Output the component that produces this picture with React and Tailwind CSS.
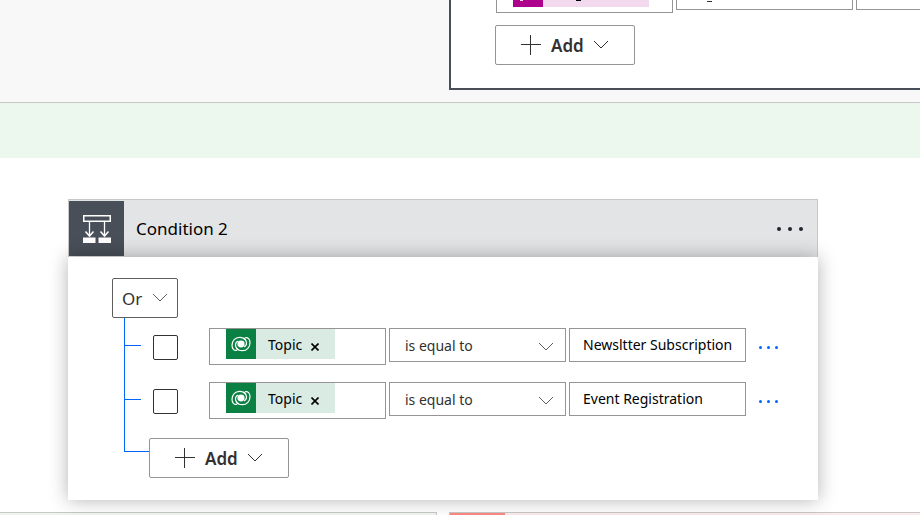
import React from "react";

function Chevron({ className = "" }) {
  return (
    <svg className={className} width="16" height="9" viewBox="0 0 16 9" fill="none" stroke="currentColor" strokeWidth="1" aria-hidden="true">
      <path d="M1 1l7 7 7-7" />
    </svg>
  );
}

function AddButton() {
  return (
    <button type="button" className="flex h-10 w-[140px] items-center rounded-xs border border-[#979593] bg-white pl-[25px] text-[17px] font-semibold text-[#323130]">
      <svg width="20" height="20" viewBox="0 0 20 20" fill="none" stroke="currentColor" aria-hidden="true">
        <path d="M0 9.5h20M9.5 0v20" />
      </svg>
      <span className="mt-px ml-[10px]">Add</span>
      <Chevron className="mb-[2px] ml-[9px]" />
    </button>
  );
}

function ConditionIcon() {
  return (
    <svg width="28" height="28" viewBox="0 0 28 28" fill="none" stroke="#fff" aria-hidden="true">
      <path d="M.75 .75h26.5v5.500H.75z" strokeWidth="1.5" />
      <path d="M6.500 6v15M21.500 6v15" strokeWidth="1.300" />
      <path d="M2.500 16.500l4 4.500 4-4.500M17.500 16.500l4 4.500 4-4.500" strokeWidth="1.500" />
      <path d="M0 22.500h12.500V28H0zM15.500 22.500H28V28H15.500z" fill="#fff" stroke="none" />
    </svg>
  );
}

function DataverseIcon() {
  return (
    <svg width="20" height="16" viewBox="0 0 20 16" fill="none" stroke="#fff" strokeWidth="1.200" aria-hidden="true">
      <path d="M6.200 14.200C3 15.300 1 12.500 1 9.300 1 5 4.200 1.300 8.500 1.300c3 0 5.200 1.200 6.300 3.200 1.200 2.300.5 5-1.600 6.500" />
      <path d="M13.800 1.800C17 .7 19 3.500 19 6.700c0 4.300-3.200 8-7.500 8-3 0-5.200-1.200-6.300-3.200C4 9.200 4.700 6.500 6.800 5" />
      <path d="M5.200 11.500c.6 1.300 1.400 2 2.600 2.500M14.800 4.500c-.6-1.300-1.400-2-2.600-2.500" />
      <ellipse cx="10" cy="8" rx="3.600" ry="3.400" fill="#fff" stroke="none" />
    </svg>
  );
}

function MoreDots({ className, dotClassName, label }) {
  return (
    <button type="button" aria-label={label} className={className}>
      <span className={dotClassName} />
      <span className={dotClassName} />
      <span className={dotClassName} />
    </button>
  );
}

function ConditionRow({ value }) {
  return (
    <div className="flex h-[54px] items-start">
      <span className="mt-[17px] h-px w-4 shrink-0 bg-[#0066ff]" />
      <input
        type="checkbox"
        aria-label={`Select ${value}`}
        className="mt-[7px] ml-3 size-[25px] shrink-0 appearance-none rounded-xs border border-[#323130] bg-white checked:bg-[#323130]"
      />
      <div className="ml-[31px] grid min-w-0 flex-1 grid-cols-3 items-start gap-[3px] text-[14px]">
        <div className="h-[37px] min-w-0 border border-[#979593] bg-white pl-4">
          <div className="flex h-[30px] w-[109px] items-center bg-[#daebe3] text-black">
            <span className="flex size-[30px] items-center justify-center bg-[#0b8043]">
              <DataverseIcon />
            </span>
            <span className="ml-3">Topic</span>
            <button type="button" aria-label="Remove Topic" className="mt-[6px] ml-[9px]">
              <svg width="8" height="8" viewBox="0 0 8 8" stroke="currentColor" strokeWidth="1.600" aria-hidden="true">
                <path d="M.5 .5l7 7M7.500 .5l-7 7" />
              </svg>
            </button>
          </div>
        </div>
        <div className="relative h-[34px] min-w-0">
          <select aria-label="Operator" className="h-full w-full appearance-none border border-[#979593] bg-white pl-[15px] text-[#323130]">
            <option>is equal to</option>
          </select>
          <Chevron className="pointer-events-none absolute top-[14px] right-3 text-[#605e5c]" />
        </div>
        <input
          type="text"
          aria-label="Value"
          defaultValue={value}
          className="h-[34px] w-full min-w-0 border border-[#979593] bg-white px-[13px] pb-[2px] text-black"
        />
      </div>
      <MoreDots
        label="More row options"
        className="mt-[18px] ml-[13px] flex w-[19px] shrink-0 items-center justify-between text-[#0066ff]"
        dotClassName="size-[3px] rounded-full bg-current"
      />
    </div>
  );
}

export default function App() {
  return (
    <div className="flex h-screen flex-col overflow-hidden bg-white font-['Noto_Sans','Open_Sans',sans-serif]">
      <section className="flex flex-col border-b border-[#c8c8c8] bg-[#f8f8f8] pb-3 pl-[449px]">
        <div className="h-[90px] border-b-2 border-l-2 border-[#484f58] bg-white pl-11">
          <div className="flex items-start gap-[3px] overflow-hidden pl-px">
            <div className="h-[13px] w-[177px] shrink-0 border border-t-0 border-[#979593] pl-4">
              <div className="flex h-[7px] w-[136px] bg-[#f2d9ee]">
                <span className="w-[30px] bg-[#ad008c] pl-[7px]">
                  <span className="block h-px w-[3px] bg-[#f2d9ee]" />
                </span>
                <span className="ml-[33px] h-px w-[5px] bg-black" />
              </div>
            </div>
            <div className="h-[10px] w-[177px] shrink-0 border border-t-0 border-[#979593] pl-[30px]">
              <span className="mt-px block h-px w-[5px] bg-[#323130]" />
            </div>
            <div className="h-[10px] w-[177px] shrink-0 border border-t-0 border-[#979593]" />
          </div>
          <div className="mt-3">
            <AddButton />
          </div>
        </div>
      </section>
      <div className="h-[55px] shrink-0 bg-[#ecf7ee]" />

      <main className="px-[68px] pt-[41px] pb-3">
        <article className="max-w-[750px]">
          <header className="flex h-[58px] items-center border border-b-0 border-[#c8c8c8] bg-[#e3e4e6] py-px">
            <span className="flex h-full w-[55px] items-center justify-center bg-[#484f58]">
              <ConditionIcon />
            </span>
            <h2 className="ml-3 flex-1 pt-px text-[17px] text-black">Condition 2</h2>
            <MoreDots
              label="More options"
              className="mr-[14px] flex w-[26px] items-center justify-between text-[#20262e]"
              dotClassName="size-1 rounded-full bg-current"
            />
          </header>
          <div className="relative bg-white px-11 pt-[21px] pb-[22px] shadow-[0_0_18px_rgba(0,0,0,0.3)]">
            <div className="relative h-10 w-[66px] text-[17px] text-[#323130]">
              <select aria-label="Group operator" className="h-full w-full appearance-none rounded-xs border border-[#605e5c] bg-white pt-px pl-[9px]">
                <option>Or</option>
                <option>And</option>
              </select>
              <Chevron className="pointer-events-none absolute top-[15px] right-[10px] text-[#605e5c]" />
            </div>
            <div className="flex pl-3">
              <span className="h-[134px] w-px shrink-0 bg-[#0066ff]" />
              <div className="-mr-1 min-w-0 flex-1 pt-[10px]">
                <ConditionRow value="Newsltter Subscription" />
                <ConditionRow value="Event Registration" />
                <div className="mt-[2px] flex">
                  <span className="mt-[13px] h-px w-6 bg-[#0066ff]" />
                  <AddButton />
                </div>
              </div>
            </div>
          </div>
        </article>
      </main>

      <footer className="flex gap-3">
        <div className="h-2 w-[437px] shrink-0 border-t border-r border-[#c8c8c8] bg-[#f0f6ef]" />
        <div className="flex h-2 flex-1 border-t border-l border-[#c8c8c8] bg-[#fdeaea]">
          <span className="w-[55px] bg-[#fb8981]" />
        </div>
      </footer>
    </div>
  );
}
